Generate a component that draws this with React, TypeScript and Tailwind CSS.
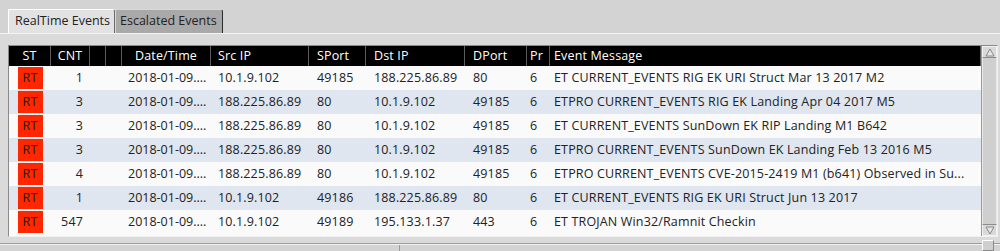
import React from "react";

type Ev = {
  cnt: string;
  src: string;
  sport: string;
  dst: string;
  dport: string;
  msg: string;
};

const EVENTS: Ev[] = [
  { cnt: "1", src: "10.1.9.102", sport: "49185", dst: "188.225.86.89", dport: "80", msg: "ET CURRENT_EVENTS RIG EK URI Struct Mar 13 2017 M2" },
  { cnt: "3", src: "188.225.86.89", sport: "80", dst: "10.1.9.102", dport: "49185", msg: "ETPRO CURRENT_EVENTS RIG EK Landing Apr 04 2017 M5" },
  { cnt: "3", src: "188.225.86.89", sport: "80", dst: "10.1.9.102", dport: "49185", msg: "ET CURRENT_EVENTS SunDown EK RIP Landing M1 B642" },
  { cnt: "3", src: "188.225.86.89", sport: "80", dst: "10.1.9.102", dport: "49185", msg: "ETPRO CURRENT_EVENTS SunDown EK Landing Feb 13 2016 M5" },
  { cnt: "4", src: "188.225.86.89", sport: "80", dst: "10.1.9.102", dport: "49185", msg: "ETPRO CURRENT_EVENTS CVE-2015-2419 M1 (b641) Observed in Su..." },
  { cnt: "1", src: "10.1.9.102", sport: "49186", dst: "188.225.86.89", dport: "80", msg: "ET CURRENT_EVENTS RIG EK URI Struct Jun 13 2017" },
  { cnt: "547", src: "10.1.9.102", sport: "49189", dst: "195.133.1.37", dport: "443", msg: "ET TROJAN Win32/Ramnit Checkin" },
];

// header cells: width + alignment, each with a grey separator on the right
const HEAD = [
  { label: "ST", cls: "w-[42px] justify-center" },
  { label: "CNT", cls: "w-[39px] justify-center" },
  { label: "", cls: "w-[16px]" },
  { label: "", cls: "w-[16px]" },
  { label: "Date/Time", cls: "w-[89px] justify-center" },
  { label: "Src IP", cls: "w-[98px] pl-[7px]" },
  { label: "SPort", cls: "w-[57px] pl-[8px]" },
  { label: "Dst IP", cls: "w-[99px] pl-[8px]" },
  { label: "DPort", cls: "w-[62px] pl-[8px]" },
  { label: "Pr", cls: "w-[23px] pl-[3px]" },
  { label: "Event Message", cls: "flex-1 pl-[4px]" },
];

function Tabs() {
  return (
    <div className="flex h-[34px] pt-[9px] pl-[8px] border-b border-[#f4f4f4] tracking-normal">
      <div className="w-[107px] h-full flex items-center pl-[6px] bg-[#e2e2e2] border-t border-l border-white border-r border-r-[#6a6a6a] rounded-tr-[3px]">
        RealTime Events
      </div>
      <div className="w-[108px] h-full flex items-center pl-[4px] bg-[#a9a9a9] border-t border-l border-[#d8d8d8] border-r border-r-[#2a2a2a] rounded-tr-[3px]">
        Escalated Events
      </div>
    </div>
  );
}

function Scrollbar() {
  return (
    <div className="w-[16px] flex flex-col bg-[#c9c9c9] border-l border-[#9a9a9a]">
      <div className="h-[12px] flex items-center justify-center bg-[#d9d9d9] border border-[#f2f2f2] border-b-[#8c8c8c]">
        <svg width="10" height="9" viewBox="0 0 10 9">
          <path d="M5 1 L9 8 L1 8 Z" fill="#e6e6e6" stroke="#8a8a8a" strokeWidth="1" />
        </svg>
      </div>
      <div className="flex-1 border-x border-[#e8e8e8] bg-[#cfcfcf]" />
      <div className="h-[12px] flex items-center justify-center bg-[#d9d9d9] border border-[#f2f2f2] border-t-[#8c8c8c]">
        <svg width="10" height="9" viewBox="0 0 10 9">
          <path d="M1 1 L9 1 L5 8 Z" fill="#e6e6e6" stroke="#8a8a8a" strokeWidth="1" />
        </svg>
      </div>
    </div>
  );
}

function Row({ ev, alt }: { ev: Ev; alt: boolean }) {
  return (
    <div className={`flex h-[24px] items-center ${alt ? "bg-[#dfe6ef]" : "bg-[#fafafa]"}`}>
      <div className="w-[42px] h-full flex justify-center pt-[1px] pb-[1px]">
        <div className="w-[25px] h-[22px] bg-[#ff2600] flex items-center justify-center text-[#1a1a1a]">RT</div>
      </div>
      <div className="w-[39px] text-right pr-[7px]">{ev.cnt}</div>
      <div className="w-[16px]" />
      <div className="w-[16px]" />
      <div className="w-[89px] pl-[6px] whitespace-nowrap overflow-hidden tracking-normal">2018-01-09....</div>
      <div className="w-[98px] pl-[7px]">{ev.src}</div>
      <div className="w-[57px] pl-[8px]">{ev.sport}</div>
      <div className="w-[99px] pl-[8px]">{ev.dst}</div>
      <div className="w-[62px] pl-[8px]">{ev.dport}</div>
      <div className="w-[23px] pl-[3px]">6</div>
      <div className="flex-1 pl-[4px] whitespace-nowrap overflow-hidden">{ev.msg}</div>
    </div>
  );
}

export default function App() {
  return (
    <div className="relative w-[1000px] h-[251px] overflow-hidden bg-[#d3d3d3] font-['Open_Sans',sans-serif] text-[12.5px] tracking-[0.15px] text-[#222]">
      <Tabs />
      <div className="h-[210px] bg-[#dadada] pt-[11px] pl-[8px] pr-[2px] border-b border-[#9c9c9c]">
        <div className="h-[192px] flex border border-[#8a8a8a] border-b-[#f0f0f0] border-r-[#f0f0f0]">
          <div className="flex-1 flex flex-col bg-[#fafafa]">
            <div className="flex h-[20px] bg-black text-white">
              {HEAD.map((h, i) => (
                <div
                  key={i}
                  className={`flex items-center h-full border-r border-[#5c5c5c] ${h.cls}`}
                >
                  {h.label}
                </div>
              ))}
            </div>
            {EVENTS.map((ev, i) => (
              <Row key={i} ev={ev} alt={i % 2 === 1} />
            ))}
          </div>
          <Scrollbar />
        </div>
      </div>
      <div className="flex h-[7px] border-t border-[#f2f2f2]">
        <div className="w-[400px] border-r border-[#9c9c9c]" />
        <div className="flex-1" />
      </div>
      <div className="absolute left-[982px] top-[240px] w-[12px] h-[11px] bg-[#cfcfcf] border border-white border-b-[#8a8a8a] border-r-[#8a8a8a]" />
    </div>
  );
}
